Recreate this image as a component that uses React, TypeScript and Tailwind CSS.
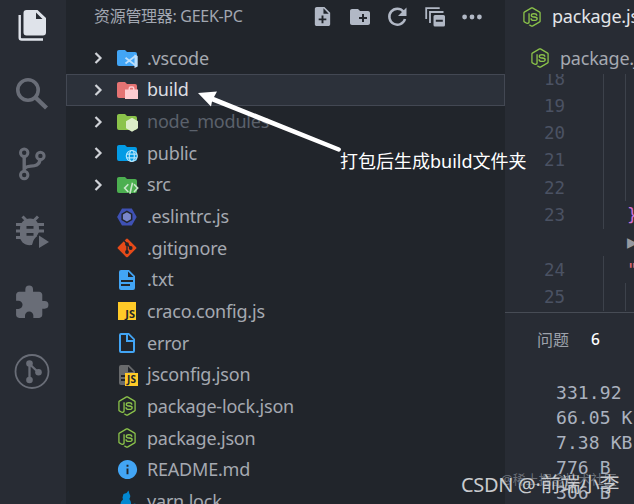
import type { ReactNode } from "react";
import { FaNodeJs } from "react-icons/fa";
import { MdCreateNewFolder, MdExtension, MdInfo, MdNoteAdd } from "react-icons/md";

type Entry = {
  name: string;
  icon: ReactNode;
  folder?: boolean;
  state?: "selected" | "ignored";
};

function FolderIcon({ color, children }: { color: string; children: ReactNode }) {
  return (
    <svg viewBox="0 0 24 24" className="size-6">
      <path
        fill={color}
        d="M10 4H4c-1.11 0-2 .89-2 2v12a2 2 0 0 0 2 2h16a2 2 0 0 0 2-2V8a2 2 0 0 0-2-2h-8l-2-2Z"
      />
      {children}
    </svg>
  );
}

function NodeIcon() {
  return <FaNodeJs className="size-5 shrink-0 text-[#8bc34a]" />;
}

const ENTRIES: Entry[] = [
  {
    name: ".vscode",
    folder: true,
    icon: (
      <FolderIcon color="#42a5f5">
        <path
          fill="none"
          stroke="#bbdefb"
          strokeWidth="1.8"
          d="M10.5 11.8l10.5 8M10.500 17.5l10.5-8"
        />
        <path fill="#bbdefb" d="M19.5 8.5l3.200 1.400v10.600l-3.200 1.400z" />
      </FolderIcon>
    ),
  },
  {
    name: "build",
    folder: true,
    state: "selected",
    icon: (
      <FolderIcon color="#e57373">
        <path
          fill="#ffcdd2"
          fillRule="evenodd"
          d="M10 11.500h3.500v-1A2.300 2.300 0 0 1 15.800 8.200h1.400a2.300 2.300 0 0 1 2.300 2.300v1H23v9.500H10zm5 0h3v-1.200a.7.7 0 0 0-.7-.6h-1.600a.7.7 0 0 0-.7.6z"
        />
      </FolderIcon>
    ),
  },
  {
    name: "node_modules",
    folder: true,
    state: "ignored",
    icon: (
      <FolderIcon color="#8bc34a">
        <path fill="#dcedc8" d="M17 7.800l6 3.500v7l-6 3.500-6-3.500v-7z" />
      </FolderIcon>
    ),
  },
  {
    name: "public",
    folder: true,
    icon: (
      <FolderIcon color="#039be5">
        <g fill="none" stroke="#b3e5fc" strokeWidth="1.2">
          <circle cx="16.8" cy="15" r="5.5" />
          <ellipse cx="16.8" cy="15" rx="2.5" ry="5.5" />
          <path d="M11.6 13.200h10.400M11.600 16.800h10.400" />
        </g>
      </FolderIcon>
    ),
  },
  {
    name: "src",
    folder: true,
    icon: (
      <FolderIcon color="#4caf50">
        <path
          fill="none"
          stroke="#c8e6c9"
          strokeWidth="1.6"
          d="M13.300 11.200l-3.700 3.900 3.700 3.900M19 11.200l3.700 3.900-3.700 3.900M17.500 9.700l-2.600 11"
        />
      </FolderIcon>
    ),
  },
  {
    name: ".eslintrc.js",
    icon: (
      <svg viewBox="0 0 24 24" className="size-6">
        <path fill="#3f51b5" d="M7 3.4h9.8l4.9 8.5-4.9 8.5H7l-4.9-8.5z" />
        <path fill="#21252b" d="M11.9 5.6l5.5 3.1v6.4l-5.5 3.1-5.5-3.1V8.7z" />
        <path fill="#7986cb" d="M11.9 7.3l4 2.300v4.600l-4 2.300-4-2.300V9.600z" />
      </svg>
    ),
  },
  {
    name: ".gitignore",
    icon: (
      <svg viewBox="0 0 24 24" className="size-6">
        <rect
          x="5"
          y="4.9"
          width="14"
          height="14"
          rx="1.3"
          fill="#e64a19"
          transform="rotate(45 12 11.9)"
        />
        <g stroke="#21252b" strokeWidth="1.4" fill="#21252b">
          <path d="M9 4.500l3 3.500v7.500M12 8l3.600 3.800" fill="none" />
          <circle cx="12" cy="8.2" r="1.2" />
          <circle cx="12" cy="16" r="1.2" />
          <circle cx="15.7" cy="12" r="1.2" />
        </g>
      </svg>
    ),
  },
  {
    name: ".txt",
    icon: (
      <svg viewBox="0 0 24 24" className="size-6">
        <path
          fill="#42a5f5"
          d="M13 9h5.500L13 3.500V9M6 2h8l6 6v12a2 2 0 0 1-2 2H6a2 2 0 0 1-2-2V4a2 2 0 0 1 2-2m9 16v-2H6v2h9m3-4v-2H6v2h12z"
        />
      </svg>
    ),
  },
  {
    name: "craco.config.js",
    icon: (
      <span className="flex h-[18px] w-[18px] items-end justify-end bg-[#ffca28] pr-px font-['Open_Sans',sans-serif] text-[11px] leading-[12px] font-bold text-[#21252b]">
        JS
      </span>
    ),
  },
  {
    name: "error",
    icon: (
      <svg viewBox="0 0 24 24" className="size-6">
        <path
          fill="#42a5f5"
          d="M13 9h5.500L13 3.500V9M6 2h8l6 6v12a2 2 0 0 1-2 2H6a2 2 0 0 1-2-2V4a2 2 0 0 1 2-2m5 2H6v16h12v-9h-7V4z"
        />
      </svg>
    ),
  },
  {
    name: "jsconfig.json",
    icon: (
      <span className="relative size-6">
        <svg viewBox="0 0 24 24" className="size-6">
          <path
            fill="#686a6c"
            d="M13 9h5.500L13 3.500V9M6 2h8l6 6v12a2 2 0 0 1-2 2H6a2 2 0 0 1-2-2V4a2 2 0 0 1 2-2m9 16v-2H6v2h9m3-4v-2H6v2h12z"
          />
        </svg>
        <span className="absolute right-[1px] bottom-[1px] flex h-[13px] w-[13px] items-center justify-center bg-[#ffca28] font-['Open_Sans',sans-serif] text-[10px] leading-none font-bold text-[#21252b]">
          JS
        </span>
      </span>
    ),
  },
  { name: "package-lock.json", icon: <NodeIcon /> },
  { name: "package.json", icon: <NodeIcon /> },
  { name: "README.md", icon: <MdInfo className="size-[23px] text-[#42a5f5]" /> },
  {
    name: "yarn.lock",
    icon: (
      <svg viewBox="0 0 24 24" className="size-6">
        <path
          fill="#0288d1"
          d="M13.500 1.500l1 3.500c1 1.200 1.200 3-.2 5 .7 1.100 2 2.500 1.700 5.500l4.300-1v2l-5 2.500c-3 1.500-7 1.500-8 .5l-3 .5-.5-2 2-1c-.8-3 .3-5 2.200-6.500L7.500 8.500l1-3.500 3-1z"
        />
      </svg>
    ),
  },
];

const rowText = {
  normal: "text-[#a5a9b1]",
  selected: "text-[#dcdee2]",
  ignored: "text-[#5b616b]",
};

function Row({ entry }: { entry: Entry }) {
  const selected = entry.state === "selected";
  return (
    <li
      className={`flex h-[31.65px] shrink-0 items-center border pl-[22px] ${
        selected ? "border-[#434853] bg-[#2c313a]" : "border-transparent"
      }`}
    >
      <svg
        viewBox="0 0 18 18"
        className="mr-[8px] size-[18px] shrink-0"
        fill="none"
        stroke="#d0d3d8"
        strokeWidth="2.2"
      >
        {entry.folder && <path d="M6.5 4l5 5-5 5" />}
      </svg>
      <span className="flex size-6 shrink-0 items-center justify-center">
        {entry.icon}
      </span>
      <span
        className={`ml-[8px] text-[18px] tracking-[-0.2px] whitespace-pre ${rowText[entry.state ?? "normal"]}`}
      >
        {entry.name}
      </span>
    </li>
  );
}

function ActivityBar() {
  return (
    <nav className="-mt-[9.6px] flex w-[66px] shrink-0 flex-col text-[#696d77]">
      <ActivityItem>
        <svg viewBox="0 0 36 36" className="size-9">
          <path
            fill="#dfe3ea"
            d="M12.500 3h11L32 11v14.500a3 3 0 0 1-3 3H12.500a3 3 0 0 1-3-3V6a3 3 0 0 1 3-3zM22 5.500v6.500h6.500z"
          />
          <path
            fill="none"
            stroke="#dfe3ea"
            strokeWidth="2.4"
            d="M5.700 8v22.500a2 2 0 0 0 2 2H29"
          />
        </svg>
      </ActivityItem>
      <ActivityItem>
        <svg viewBox="0 0 36 36" className="size-9" fill="none" stroke="currentColor">
          <circle cx="14" cy="14" r="10.200" strokeWidth="3.6" />
          <path d="M21.500 21.500l11 10.500" strokeWidth="4.4" />
        </svg>
      </ActivityItem>
      <ActivityItem>
        <svg
          viewBox="0 0 36 36"
          className="size-9"
          fill="none"
          stroke="currentColor"
          strokeWidth="3"
        >
          <circle cx="10.200" cy="6.700" r="3.700" />
          <circle cx="26.400" cy="9.900" r="3.700" />
          <circle cx="10.200" cy="29" r="3.700" />
          <path strokeWidth="3.4" d="M10.200 10.500v15M10.800 22.800c1.500-5 14 .5 15.200-9" />
        </svg>
      </ActivityItem>
      <ActivityItem>
        <svg viewBox="0 0 36 36" className="size-9">
          <path
            fill="none"
            stroke="currentColor"
            strokeWidth="3"
            d="M8.500 1.500l4 4M24 1.500l-4 4M2 9.500h28M2 16h28M2 22.500h23"
          />
          <path
            fill="currentColor"
            d="M16 3.500c6 0 9 4.500 9 10v3.500l-7 13c-7.500 1-12-3.500-12-9v-7.500c0-5.500 4-10 10-10z"
          />
          <path
            fill="#282c34"
            d="M12.500 11h7v2.800h-7zM12.500 18h7v2.800h-7zM18.500 32c-.5-7 3-10.500 8-12.500h9v4l-9-3v12z"
          />
          <path fill="currentColor" d="M25 20.500l10 6.500-10 6z" />
        </svg>
      </ActivityItem>
      <ActivityItem>
        <MdExtension className="size-[37px]" />
      </ActivityItem>
      <ActivityItem>
        <svg viewBox="0 0 36 36" className="size-9">
          <circle
            cx="18"
            cy="17.500"
            r="16.500"
            fill="none"
            stroke="currentColor"
            strokeWidth="1.8"
          />
          <path
            d="M15.500 10v16M15.500 10l9.500 9"
            fill="none"
            stroke="currentColor"
            strokeWidth="2.3"
          />
          <circle cx="15.500" cy="9.500" r="3.300" fill="currentColor" />
          <circle cx="15.500" cy="26" r="3.300" fill="currentColor" />
          <circle cx="24.500" cy="18.200" r="3.300" fill="currentColor" />
        </svg>
      </ActivityItem>
    </nav>
  );
}

function ActivityItem({ children }: { children: ReactNode }) {
  return (
    <div className="flex h-[69.3px] shrink-0 items-center justify-center pr-[3px]">
      {children}
    </div>
  );
}

function Explorer() {
  return (
    <aside className="flex w-[439px] shrink-0 flex-col bg-[#21252b]">
      <div className="flex h-[42.5px] shrink-0 items-start pt-[3px] pl-[28px] text-[#a2a7b1]">
        <h2 className="w-[217px] shrink-0 text-[16px] leading-[26px] tracking-[-0.3px] whitespace-nowrap">
          资源管理器: GEEK-PC
        </h2>
        <div className="flex h-[27px] shrink-0 items-center gap-[13.5px] text-[#b1b8c5]">
          <MdNoteAdd className="size-[23px]" />
          <MdCreateNewFolder className="size-6" />
          <svg viewBox="0 0 24 24" className="size-6">
            <path
              fill="none"
              stroke="currentColor"
              strokeWidth="2.5"
              d="M18.500 6.600A8 8 0 1 0 20 14"
            />
            <path fill="currentColor" d="M21.500 2.500v8.500H13z" />
          </svg>
          <svg viewBox="0 0 24 24" className="size-6">
            <path
              fill="none"
              stroke="currentColor"
              strokeWidth="1.8"
              d="M3.200 14V3.200h13.500M7 18V7h13.500"
            />
            <path
              fill="currentColor"
              fillRule="evenodd"
              d="M12 10h8.500a1.500 1.500 0 0 1 1.500 1.500v8.500a1.500 1.500 0 0 1-1.500 1.500H12a1.500 1.500 0 0 1-1.500-1.500v-8.500A1.500 1.500 0 0 1 12 10zM12.800 14.700v2h7v-2z"
            />
          </svg>
          <svg viewBox="0 0 24 24" className="size-6" fill="currentColor">
            <circle cx="4.600" cy="12" r="2.400" />
            <circle cx="12" cy="12" r="2.400" />
            <circle cx="19.400" cy="12" r="2.400" />
          </svg>
        </div>
      </div>
      <ul className="flex flex-col">
        {ENTRIES.map((entry) => (
          <Row key={entry.name} entry={entry} />
        ))}
      </ul>
    </aside>
  );
}

const LINES = [
  { no: "18", outer: true, inner: true },
  { no: "19", outer: true, inner: true },
  { no: "20", outer: true, inner: true },
  { no: "21", outer: true, inner: true },
  { no: "22", outer: true, inner: true },
  { no: "23", outer: true, code: "}", color: "text-[#d670d6]" },
  { no: "", code: "▶", color: "text-[#9699a0]" },
  { no: "24", outer: true, code: '"', color: "text-[#e06c75]" },
  { no: "25", outer: true, inner: true },
];

function Editor() {
  return (
    <section className="flex h-[313px] shrink-0 flex-col border-b border-[#474c55]">
      <div className="flex h-[33px] shrink-0 items-center gap-[10px] pl-[17px] text-[18px] tracking-[-0.2px] whitespace-nowrap text-[#e3e5e9]">
        <NodeIcon />
        package.json
      </div>
      <div className="flex h-[41px] shrink-0 items-center gap-[10px] pt-[9px] pl-[25px] text-[18px] tracking-[-0.2px] whitespace-nowrap text-[#a5a9b1]">
        <NodeIcon />
        package.json
      </div>
      <div className="flex min-h-0 flex-1 flex-col overflow-hidden font-['DejaVu_Sans_Mono',monospace] text-[17.5px]">
        <div className="-mt-[9px] flex flex-col">
          {LINES.map((line, i) => (
            <div key={i} className="flex h-[27.3px] shrink-0 items-center">
              <span className="w-[98px] shrink-0 pl-[39px] text-[#4b5263]">
                {line.no}
              </span>
              <span
                className={`h-full w-[22px] shrink-0 border-l ${line.outer ? "border-[#3d424b]" : "border-transparent"}`}
              />
              <span
                className={`flex h-full w-6 shrink-0 items-center border-l pl-px ${line.inner ? "border-[#3d424b]" : "border-transparent"} ${line.color ?? ""}`}
              >
                {line.code}
              </span>
            </div>
          ))}
        </div>
      </div>
    </section>
  );
}

function Panel() {
  return (
    <section className="flex flex-col">
      <div className="flex h-[53px] items-center gap-[22px] pl-[32px] text-[16px] whitespace-nowrap">
        <span className="text-[#9ca1aa]">问题</span>
        <span className="text-[15.5px] font-medium text-white">6</span>
      </div>
      <pre className="pt-[14px] pl-[51px] font-['DejaVu_Sans_Mono',monospace] text-[18px] leading-[25px] tracking-[0.1px] text-[#abb2bf]">
        {"331.92 \n66.05 K\n7.38 KB\n776 B\n306 B"}
      </pre>
    </section>
  );
}

export default function App() {
  return (
    <div className="relative flex h-[504px] w-[634px] overflow-hidden bg-[#282c34] font-['Noto_Sans','Noto_Sans_CJK_SC',sans-serif]">
      <ActivityBar />
      <Explorer />
      <main className="flex min-w-0 flex-1 flex-col overflow-hidden">
        <Editor />
        <Panel />
      </main>

      {/* annotation over the file tree */}
      <svg viewBox="0 0 634 504" className="pointer-events-none absolute inset-0">
        <path
          fill="#fff"
          d="M198 93l19-1.500-3 5.500L339.500 147.500a2 2 0 0 1-1.500 4L212 101.500l-1 5z"
        />
      </svg>
      <span className="absolute top-[148px] left-[340px] text-[18px] leading-[26px] whitespace-nowrap text-white">
        打包后生成build文件夹
      </span>

      <span className="absolute top-[469px] left-[501px] text-[13px] leading-[20px] whitespace-nowrap text-[#7d828b]/80">
        @稀土掘金技术社区
      </span>
      <span className="absolute top-[471px] left-[461px] text-[20px] leading-[28px] tracking-[-0.35px] whitespace-nowrap text-[#c9cbce]">
        CSDN @·前端小李
      </span>
    </div>
  );
}
